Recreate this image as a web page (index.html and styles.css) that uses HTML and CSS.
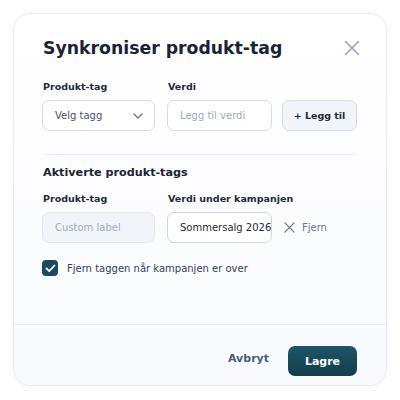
FILE: index.html
```html
<!DOCTYPE html>
<html lang="no">
<head>
    <meta charset="UTF-8">
    <meta name="viewport" content="width=device-width, initial-scale=1.0">
    <title>Synkroniser produkt-tag</title>
    <link rel="stylesheet" href="styles.css">
</head>
<body>
    <div class="modal">
        <div class="modal-body">
            <div class="modal-header">
                <h1>Synkroniser produkt-tag</h1>
                <button class="close-btn" aria-label="Lukk">
                    <svg width="16" height="16" viewBox="0 0 16 16"><path d="M1.5 1.5 L14.5 14.5 M14.5 1.5 L1.5 14.5" stroke="#94a3b8" stroke-width="1.6" stroke-linecap="round"/></svg>
                </button>
            </div>

            <div class="form-row">
                <div class="field field-tag">
                    <label>Produkt-tag</label>
                    <div class="select">
                        <span>Velg tagg</span>
                        <svg width="10" height="6" viewBox="0 0 10 6"><path d="M1 1 L5 5 L9 1" fill="none" stroke="#64748b" stroke-width="1.3" stroke-linecap="round" stroke-linejoin="round"/></svg>
                    </div>
                </div>
                <div class="field field-value">
                    <label>Verdi</label>
                    <div class="input placeholder">Legg til verdi</div>
                </div>
                <button class="add-btn">+ Legg til</button>
            </div>

            <hr class="divider">

            <h2>Aktiverte produkt-tags</h2>

            <div class="form-row">
                <div class="field field-tag">
                    <label>Produkt-tag</label>
                    <div class="input disabled">Custom label</div>
                </div>
                <div class="field field-value">
                    <label>Verdi under kampanjen</label>
                    <div class="input filled">Sommersalg 2026</div>
                </div>
                <button class="remove-btn">
                    <svg width="11" height="11" viewBox="0 0 12 12"><path d="M1 1 L11 11 M11 1 L1 11" stroke="#64748b" stroke-width="1.3" stroke-linecap="round"/></svg>
                    Fjern
                </button>
            </div>

            <label class="check">
                <span class="box">
                    <svg width="11" height="9" viewBox="0 0 11 9"><path d="M1.5 4.5 L4.2 7.2 L9.5 1.5" fill="none" stroke="#fff" stroke-width="1.8" stroke-linecap="round" stroke-linejoin="round"/></svg>
                </span>
                Fjern taggen når kampanjen er over
            </label>
        </div>

        <div class="modal-footer">
            <button class="cancel-btn">Avbryt</button>
            <button class="save-btn">Lagre</button>
        </div>
    </div>
</body>
</html>
```

FILE: styles.css
```css
* {
    box-sizing: border-box;
    margin: 0;
    padding: 0;
}

body {
    font-family: 'DejaVu Sans', sans-serif;
    background: #ffffff;
    padding: 13px;
    color: #1e293b;
}

button {
    font-family: inherit;
    border: none;
    background: none;
    cursor: pointer;
}

.modal {
    width: 374px;
    height: 373px;
    border: 1px solid #e6eaf1;
    border-radius: 16px;
    background: linear-gradient(180deg, #ffffff 0%, #f9fafd 100%);
    display: flex;
    flex-direction: column;
    overflow: hidden;
}

.modal-body {
    flex: 1;
    padding: 22px 29px 0 28px;
}

.modal-header {
    display: flex;
    justify-content: space-between;
    align-items: center;
    height: 24px;
}

h1 {
    font-size: 17.3px;
    line-height: 24px;
    font-weight: bold;
    color: #1a2436;
    padding-left: 1px;
}

.close-btn {
    width: 16px;
    height: 16px;
    margin-right: -3px;
    display: flex;
}

.form-row {
    display: flex;
    align-items: flex-end;
    margin-top: 21px;
}

.field {
    display: flex;
    flex-direction: column;
}

.field label {
    font-size: 9.5px;
    line-height: 12px;
    font-weight: bold;
    color: #1e293b;
    padding-left: 1px;
    margin-bottom: 7px;
    white-space: nowrap;
}

.field-tag {
    width: 113px;
    margin-right: 12px;
}

.field-value {
    width: 105px;
    margin-right: 10px;
}

.select,
.input {
    height: 31px;
    border: 1px solid #d5dde8;
    border-radius: 7px;
    background: #fff;
    font-size: 10px;
    display: flex;
    align-items: center;
    padding: 0 12px;
    white-space: nowrap;
    overflow: hidden;
}

.select {
    justify-content: space-between;
    color: #475569;
    padding-right: 11px;
}

.placeholder {
    color: #a0abbb;
}

.disabled {
    background: #f1f5f9;
    border-color: #e2e8f0;
    color: #a0abbb;
}

.filled {
    color: #1e293b;
    border-color: #cdd6e2;
    padding: 0 8px 0 12px;
}

.add-btn {
    width: 75px;
    height: 31px;
    border: 1px solid #d5dde8;
    border-radius: 7px;
    background: #f1f4f9;
    font-size: 9.5px;
    font-weight: bold;
    color: #1e293b;
}

.remove-btn {
    height: 31px;
    display: flex;
    align-items: center;
    gap: 7px;
    padding-left: 2px;
    font-size: 10px;
    color: #64748b;
}

.divider {
    border: none;
    border-top: 1px solid #e8edf3;
    margin: 23px 1px 0 1px;
}

h2 {
    font-size: 11.2px;
    line-height: 14px;
    font-weight: bold;
    color: #1a2436;
    margin-top: 11px;
    padding-left: 1px;
}

h2 + .form-row {
    margin-top: 13px;
}

.check {
    display: flex;
    align-items: center;
    gap: 9px;
    margin-top: 17px;
    font-size: 10px;
    color: #334155;
}

.box {
    width: 16px;
    height: 16px;
    border-radius: 4px;
    background: #1d4a5e;
    display: flex;
    align-items: center;
    justify-content: center;
}

.modal-footer {
    height: 61px;
    border-top: 1px solid #e8edf3;
    background: #f9fafd;
    display: flex;
    justify-content: flex-end;
    align-items: flex-start;
    padding: 21px 29px 0 0;
    gap: 19px;
}

.cancel-btn {
    height: 25px;
    font-size: 11px;
    font-weight: bold;
    color: #4b5d78;
}

.save-btn {
    width: 69px;
    height: 30px;
    border-radius: 7px;
    background: linear-gradient(180deg, #1e5569 0%, #143c4c 100%);
    color: #fff;
    font-size: 11px;
    font-weight: bold;
}
```
